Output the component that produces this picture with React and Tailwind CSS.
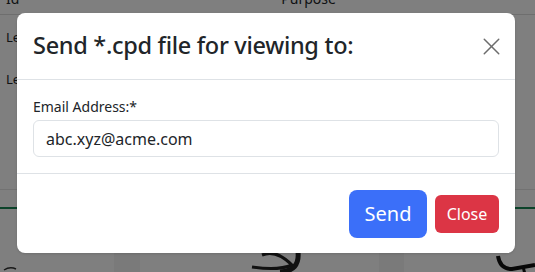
import { X } from 'lucide-react'

export default function App() {
  return (
    <div className="relative h-[272px] w-[535px] overflow-hidden bg-white font-['Noto_Sans','Open_Sans',sans-serif] text-[#212529]">
      {/* Page underneath */}
      <div className="flex h-full flex-col">
        <div className="flex h-[15px] items-start overflow-hidden border-b border-[#dcdcdc] text-[14px] leading-none">
          <span className="ml-[6px] -mt-[8px]">Id</span>
          <span className="ml-[262px] -mt-[8px]">Purpose</span>
        </div>
        <div className="h-[174px] text-[13px]">
          <div className="ml-[6px] mt-[13px]">Lease</div>
          <div className="ml-[6px] mt-[22px]">Lease</div>
        </div>
        <div className="h-[18px] border-t border-[#e4e4e4]" />
        <div className="h-[2px] bg-[#198754]" />
        <div className="relative flex-1">
          <div className="flex h-full">
            <div className="w-[114px]" />
            <div className="w-[26px] bg-[#f4f4f4]" />
            <div className="w-[239px]" />
            <div className="w-[25px] bg-[#f4f4f4]" />
          </div>
          <svg className="absolute inset-0" width="535" height="63" viewBox="0 0 535 63">
            <path d="M4 61 Q10 57 16 60" stroke="#333" strokeWidth="1.5" fill="none" />
            <path d="M262 46 Q276 40 292 56 Q278 62 252 58" stroke="#222" strokeWidth="3" fill="none" />
            <path d="M298 43 Q300 62 280 63" stroke="#222" strokeWidth="5" fill="none" />
            <path d="M498 47 Q500 60 512 60 L535 56" stroke="#111" strokeWidth="4" fill="none" />
            <path d="M523 57 L526 70" stroke="#111" strokeWidth="3" fill="none" />
          </svg>
        </div>
      </div>

      {/* Backdrop */}
      <div className="absolute inset-0 bg-black/50" />

      {/* Modal */}
      <div className="absolute left-[17px] top-[13px] w-[498px] rounded-[8px] bg-white shadow-sm">
        <div className="flex h-[67px] items-center justify-between border-b border-[#dee2e6] pl-[16px] pr-[9px]">
          <h5 className="text-[23.5px] font-medium leading-none tracking-[-0.3px]">Send *.cpd file for viewing to:</h5>
          <X className="h-[29px] w-[29px] text-[#6c6c6c]" strokeWidth={1.2} />
        </div>
        <div className="border-b border-[#dee2e6] px-[16px] pb-[16px] pt-[16px]">
          <label className="mb-[3px] block text-[14px] leading-[21px]">Email Address:*</label>
          <div className="flex h-[37px] items-center rounded-[6px] border border-[#dee2e6] px-[12px] text-[16px]">
            abc.xyz@acme.com
          </div>
        </div>
        <div className="flex h-[79px] items-center justify-end gap-[8px] px-[16px]">
          <button className="h-[48px] w-[78px] rounded-[8px] bg-[#3b6ff9] text-[20px] text-white">Send</button>
          <button className="h-[38px] w-[64px] rounded-[6px] bg-[#dc3545] text-[16px] text-white">Close</button>
        </div>
      </div>
    </div>
  )
}
